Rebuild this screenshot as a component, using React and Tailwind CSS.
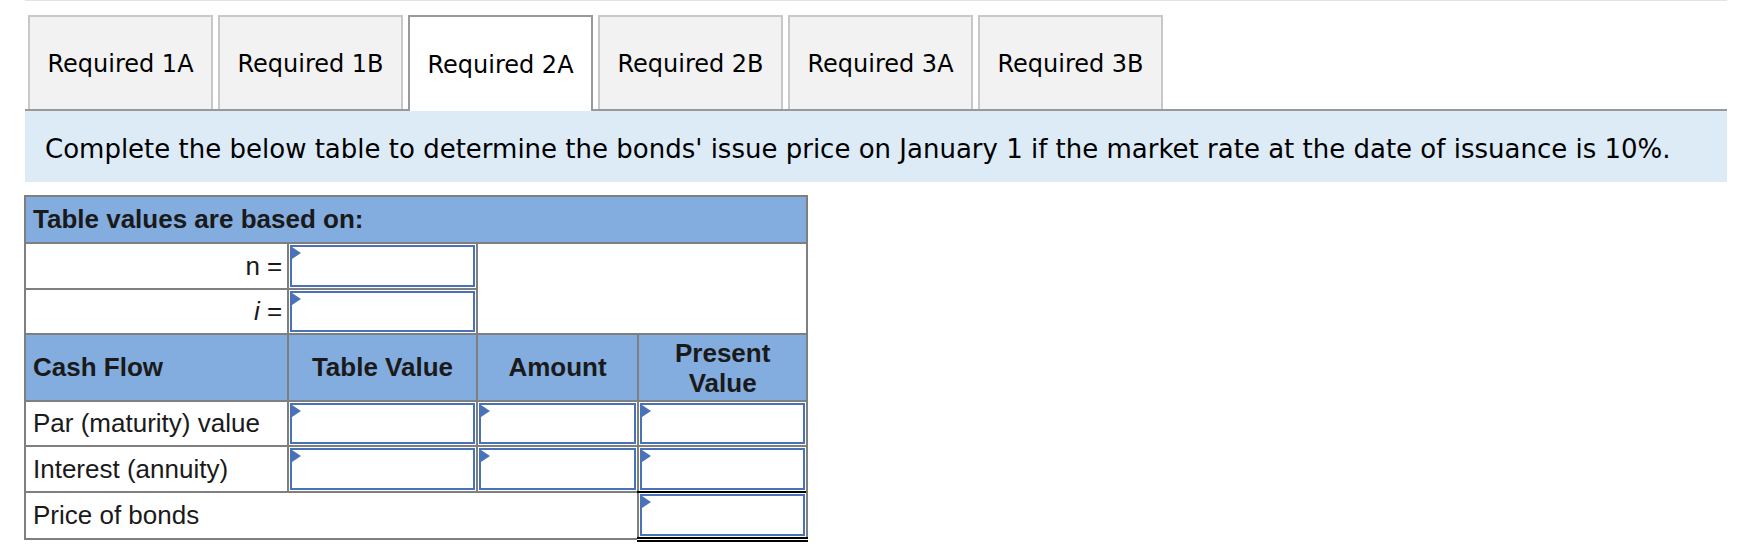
import React from 'react'

const tabs = ['Required 1A', 'Required 1B', 'Required 2A', 'Required 2B', 'Required 3A', 'Required 3B']

function Flag() {
  return (
    <svg width="9" height="12" viewBox="0 0 9 12" className="absolute left-0 top-0">
      <polygon points="0,0 9,6 0,12" fill="#4a73b7" />
    </svg>
  )
}

function Field() {
  return (
    <div className="relative h-full w-full border-2 border-[#4a73b7] bg-white">
      <Flag />
    </div>
  )
}

export default function App() {
  const tabFont = { fontFamily: '"DejaVu Sans", Verdana, sans-serif' }
  return (
    <div className="w-[1758px] h-[557px] bg-white overflow-hidden">
      {/* ── top rule ── */}
      <div className="ml-[25px] w-[1702px] h-px bg-[#e3e3e3]" />

      {/* ── tabs ── */}
      <div className="ml-[25px] w-[1702px] mt-[14px] border-b-2 border-[#999999] flex gap-[5px] pl-[3px]" style={tabFont}>
        {tabs.map((t, i) => (
          <div
            key={t}
            className={
              i === 2
                ? 'w-[185px] h-[96px] -mb-[2px] pt-[2px] bg-white border-2 border-b-0 border-[#999999] flex items-center justify-center text-[24px] text-black'
                : 'w-[185px] h-[94px] pt-[2px] bg-[#f2f2f2] border-2 border-b-0 border-[#c8c8c8] flex items-center justify-center text-[24px] text-black'
            }
          >
            {t}
          </div>
        ))}
      </div>

      {/* ── instructions ── */}
      <div className="ml-[25px] w-[1702px] h-[71px] pt-[5px] bg-[#ddebf7] flex items-center pl-[20px] text-[26px] text-black" style={tabFont}>
        Complete the below table to determine the bonds' issue price on January 1 if the market rate at the date of issuance is 10%.
      </div>

      {/* ── table ── */}
      <div className="ml-[24px] mt-[13px] w-[784px]" style={{ fontFamily: '"Liberation Sans", Arial, sans-serif' }}>
        <table className="border-collapse w-[784px] text-[26px] text-[#1a1a1a]">
          <colgroup>
            <col className="w-[264px]" />
            <col className="w-[189px]" />
            <col className="w-[162px]" />
            <col className="w-[169px]" />
          </colgroup>
          <tbody>
            <tr className="h-[47px] bg-[#83acdf]">
              <td colSpan={4} className="border-2 border-[#7f7f7f] px-[7px] font-bold">Table values are based on:</td>
            </tr>
            <tr className="h-[46px]">
              <td className="border-2 border-[#7f7f7f] text-right pr-[5px]">n =</td>
              <td className="border-2 border-[#7f7f7f] p-px h-[46px]"><Field /></td>
              <td colSpan={2} rowSpan={2} className="border-2 border-[#7f7f7f]" />
            </tr>
            <tr className="h-[45px]">
              <td className="border-2 border-[#7f7f7f] text-right pr-[5px]"><i>i</i> =</td>
              <td className="border-2 border-[#7f7f7f] p-px h-[45px]"><Field /></td>
            </tr>
            <tr className="h-[67px] bg-[#83acdf] font-bold">
              <td className="border-2 border-[#7f7f7f] px-[7px]">Cash Flow</td>
              <td className="border-2 border-[#7f7f7f] text-center">Table Value</td>
              <td className="border-2 border-[#7f7f7f] text-center">Amount</td>
              <td className="border-2 border-[#7f7f7f] text-center leading-[30px]">Present<br />Value</td>
            </tr>
            <tr className="h-[45px]">
              <td className="border-2 border-[#7f7f7f] px-[7px]">Par (maturity) value</td>
              <td className="border-2 border-[#7f7f7f] p-px h-[45px]"><Field /></td>
              <td className="border-2 border-[#7f7f7f] p-px h-[45px]"><Field /></td>
              <td className="border-2 border-[#7f7f7f] p-px h-[45px]"><Field /></td>
            </tr>
            <tr className="h-[46px]">
              <td className="border-2 border-[#7f7f7f] px-[7px]">Interest (annuity)</td>
              <td className="border-2 border-[#7f7f7f] p-px h-[46px]"><Field /></td>
              <td className="border-2 border-[#7f7f7f] p-px h-[46px]"><Field /></td>
              <td className="border-2 border-[#7f7f7f] p-px h-[46px]"><Field /></td>
            </tr>
            <tr className="h-[47px]">
              <td colSpan={3} className="border-2 border-[#7f7f7f] px-[7px]">Price of bonds</td>
              <td className="border-t-2 border-t-black border-b-[5px] border-b-black border-double border-r-2 border-r-[#7f7f7f] p-px h-[47px]"><Field /></td>
            </tr>
          </tbody>
        </table>
      </div>
    </div>
  )
}
